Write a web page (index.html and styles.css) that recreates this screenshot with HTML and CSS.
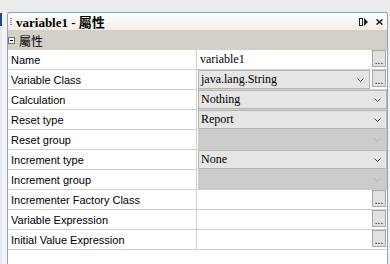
FILE: index.html
```html
<!DOCTYPE html>
<html>
<head>
<meta charset="utf-8">
<link rel="stylesheet" href="styles.css">
</head>
<body>
<div class="topbar"></div>
<div class="main">
  <div class="leftstrip"><div class="tabedge"></div></div>
  <div class="panel">
    <div class="title">
      <span class="grip"></span>
      <span class="title-text">variable1 - 屬性</span>
      <span class="title-icons">
        <svg width="9" height="8" viewBox="0 0 9 8"><rect x="0.5" y="0.5" width="3" height="7" fill="none" stroke="#222"/><path d="M5 0 L9 4 L5 8 Z" fill="#222"/></svg>
        <svg width="7" height="6" viewBox="0 0 7 6"><path d="M0.5 0.5 L6.5 5.5 M6.5 0.5 L0.5 5.5" stroke="#222" stroke-width="1.6"/></svg>
      </span>
    </div>
    <div class="category">
      <span class="minus"></span>
      <span class="cat-text">屬性</span>
    </div>
    <div class="grid">
      <div class="label">Name</div>
      <div class="value"><span class="vtext">variable1</span><span class="dots">...</span></div>

      <div class="label">Variable Class</div>
      <div class="value"><span class="combo"><span class="ctext">java.lang.String</span><svg class="chev" width="7" height="4" viewBox="0 0 7 4"><path d="M0.5 0.5 L3.5 3.5 L6.5 0.5" fill="none" stroke="#555"/></svg></span><span class="dots">...</span></div>

      <div class="label">Calculation</div>
      <div class="value"><span class="combo"><span class="ctext">Nothing</span><svg class="chev" width="7" height="4" viewBox="0 0 7 4"><path d="M0.5 0.5 L3.5 3.5 L6.5 0.5" fill="none" stroke="#555"/></svg></span></div>

      <div class="label">Reset type</div>
      <div class="value"><span class="combo"><span class="ctext">Report</span><svg class="chev" width="7" height="4" viewBox="0 0 7 4"><path d="M0.5 0.5 L3.5 3.5 L6.5 0.5" fill="none" stroke="#555"/></svg></span></div>

      <div class="label">Reset group</div>
      <div class="value"><span class="combo disabled"><span class="ctext"></span><svg class="chev" width="7" height="4" viewBox="0 0 7 4"><path d="M0.5 0.5 L3.5 3.5 L6.5 0.5" fill="none" stroke="#b4b4b4"/></svg></span></div>

      <div class="label">Increment type</div>
      <div class="value"><span class="combo"><span class="ctext">None</span><svg class="chev" width="7" height="4" viewBox="0 0 7 4"><path d="M0.5 0.5 L3.5 3.5 L6.5 0.5" fill="none" stroke="#555"/></svg></span></div>

      <div class="label">Increment group</div>
      <div class="value"><span class="combo disabled"><span class="ctext"></span><svg class="chev" width="7" height="4" viewBox="0 0 7 4"><path d="M0.5 0.5 L3.5 3.5 L6.5 0.5" fill="none" stroke="#b4b4b4"/></svg></span></div>

      <div class="label">Incrementer Factory Class</div>
      <div class="value"><span class="vtext"></span><span class="dots">...</span></div>

      <div class="label">Variable Expression</div>
      <div class="value"><span class="vtext"></span><span class="dots">...</span></div>

      <div class="label">Initial Value Expression</div>
      <div class="value"><span class="vtext"></span><span class="dots">...</span></div>
    </div>
  </div>
  <div class="rightstrip"></div>
</div>
</body>
</html>
```
FILE: styles.css
```css
html, body {
  margin: 0;
  padding: 0;
  width: 390px;
  height: 264px;
  overflow: hidden;
  background: #ececec;
  font-family: "Liberation Sans", Arial, sans-serif;
}
.topbar {
  height: 12px;
  background: #ececec;
}
.main {
  display: flex;
  height: 252px;
}
.leftstrip {
  width: 7px;
  background: #f2f2f2;
  border-left: 2px solid #e6eaf0;
  box-sizing: border-box;
}
.tabedge {
  width: 2px;
  height: 13px;
  margin-left: -2px;
  margin-top: 1px;
  background: #1d4a86;
}
.rightstrip {
  width: 2px;
  background: #f0f0f0;
}
.panel {
  width: 381px;
  box-sizing: border-box;
  border: 1px solid #8ea3bd;
  border-bottom: none;
  border-radius: 3px 3px 0 0;
  background: #ffffff;
  display: flex;
  flex-direction: column;
}
.title {
  height: 17px;
  display: flex;
  align-items: center;
  background: linear-gradient(#fdfdfb, #f1f0ea);
  border-radius: 3px 3px 0 0;
}
.grip {
  width: 2px;
  height: 7px;
  margin-left: 2px;
  margin-right: 4px;
  background: repeating-linear-gradient(#9a9a9a 0 1px, transparent 1px 2px);
}
.title-text {
  font-family: "Liberation Serif", "Noto Sans CJK TC", serif;
  font-weight: bold;
  font-size: 13px;
  color: #000;
  flex: 1;
}
.title-icons {
  display: flex;
  align-items: center;
  gap: 8px;
  margin-right: 4px;
}
.category {
  height: 20px;
  background: #d4d0c8;
  display: flex;
  align-items: center;
}
.minus {
  width: 5px;
  height: 5px;
  border: 1px solid #6d6d6d;
  background: #fff;
  margin-right: 4px;
  position: relative;
}
.minus::after {
  content: "";
  position: absolute;
  left: 1px;
  top: 2px;
  width: 3px;
  height: 1px;
  background: #000;
}
.cat-text {
  font-family: "Noto Sans CJK TC", sans-serif;
  font-size: 12px;
  color: #000;
}
.grid {
  display: grid;
  grid-template-columns: 189px 1fr;
  grid-auto-rows: 20px;
}
.label {
  border-right: 1px solid #d4d0c8;
  border-bottom: 1px solid #d4d0c8;
  font-size: 11px;
  color: #000;
  padding-left: 3px;
  display: flex;
  align-items: center;
}
.value {
  border-bottom: 1px solid #d4d0c8;
  display: flex;
  align-items: stretch;
  padding-left: 1px;
}
.vtext {
  flex: 1;
  font-family: "Liberation Serif", serif;
  font-size: 12px;
  padding-left: 2px;
  display: flex;
  align-items: center;
}
.dots {
  width: 12px;
  height: 15px;
  margin: 0 1px 0 2px;
  align-self: flex-start;
  border: 1px solid #a7a7a7;
  background: #e1e1e1;
  font-size: 10px;
  line-height: 20px;
  text-align: center;
  color: #000;
  overflow: hidden;
}
.combo {
  flex: 1;
  display: flex;
  align-items: center;
  border: 1px solid #b4b4b4;
  background: #e5e5e5;
  height: 17px;
}
.combo.disabled {
  background: #cccccc;
  border-color: #c6c6c6;
}
.ctext {
  flex: 1;
  font-family: "Liberation Serif", serif;
  font-size: 12px;
  padding-left: 2px;
  color: #000;
}
.chev {
  margin-right: 5px;
  flex: none;
}
```
